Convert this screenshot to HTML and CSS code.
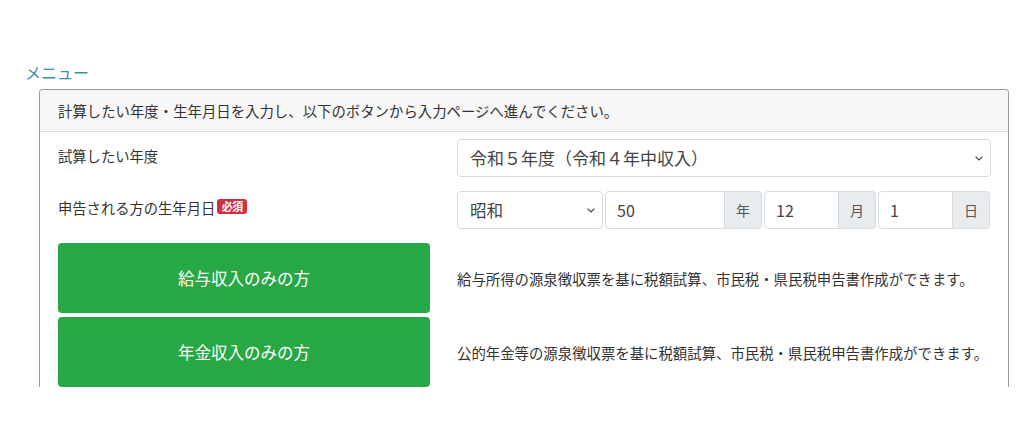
FILE: index.html
```html
<!DOCTYPE html>
<html lang="ja">
<head>
<meta charset="utf-8">
<title>メニュー</title>
<link rel="stylesheet" href="styles.css">
</head>
<body>
<main class="page">
  <h2 class="menu-title">メニュー</h2>
  <section class="card">
    <div class="card-header">計算したい年度・生年月日を入力し、以下のボタンから入力ページへ進んでください。</div>
    <div class="card-body">
      <div class="form-row row-year">
        <div class="label">試算したい年度</div>
        <div class="field">
          <select class="form-select year-select">
            <option>令和５年度（令和４年中収入）</option>
          </select>
        </div>
      </div>
      <div class="form-row row-birth">
        <div class="label">申告される方の生年月日<span class="badge">必須</span></div>
        <div class="field birth">
          <select class="form-select era">
            <option>昭和</option>
          </select>
          <div class="input-group grp-year">
            <input class="form-control" type="text" value="50">
            <span class="addon">年</span>
          </div>
          <div class="input-group grp-md">
            <input class="form-control" type="text" value="12">
            <span class="addon">月</span>
          </div>
          <div class="input-group grp-md">
            <input class="form-control" type="text" value="1">
            <span class="addon">日</span>
          </div>
        </div>
      </div>
      <div class="menu-row first">
        <a class="btn-green" href="#">給与収入のみの方</a>
        <p class="desc">給与所得の源泉徴収票を基に税額試算、市民税・県民税申告書作成ができます。</p>
      </div>
      <div class="menu-row">
        <a class="btn-green" href="#">年金収入のみの方</a>
        <p class="desc">公的年金等の源泉徴収票を基に税額試算、市民税・県民税申告書作成ができます。</p>
      </div>
    </div>
  </section>
</main>
</body>
</html>
```

FILE: styles.css
```css
* { box-sizing: border-box; }

html, body {
  margin: 0;
  padding: 0;
  background: #fff;
}

body {
  font-family: "Noto Sans CJK JP", "Noto Sans", sans-serif;
  color: #333;
  font-size: 14px;
  line-height: 1.5;
  text-spacing-trim: space-all;
}

.page {
  padding-top: 60px;
}

.menu-title {
  margin: 0 0 5px 25px;
  font-size: 16px;
  font-weight: normal;
  line-height: 24px;
  color: #3a8dab;
}

.card {
  margin-left: 39px;
  width: 970px;
  height: 298px;
  overflow: hidden;
  border: 1px solid #9a9a9a;
  border-bottom: none;
  border-radius: 4px 4px 0 0;
}

.card-header {
  background: #f7f7f7;
  border-bottom: 1px solid #dedede;
  padding: 10px 18px;
  font-size: 14.4px;
  line-height: 21px;
  color: #333;
}

.card-body {
  padding: 7px 17px 0 18px;
}

.form-row {
  display: grid;
  grid-template-columns: 372px 1fr;
  column-gap: 27px;
  margin-bottom: 14px;
}

.label {
  padding-top: 6px;
  font-size: 14.3px;
  line-height: 21px;
  display: flex;
  align-items: flex-start;
}

.badge {
  display: inline-block;
  margin-left: 2px;
  margin-top: 2px;
  width: 30px;
  height: 15px;
  line-height: 15px;
  font-size: 11px;
  font-weight: bold;
  text-align: center;
  color: #fff;
  background: #d1303f;
  border-radius: 3px;
  letter-spacing: -0.5px;
}

.form-select,
.form-control {
  display: block;
  height: 38px;
  font-family: inherit;
  font-size: 16px;
  line-height: 24px;
  color: #444;
  background-color: #fff;
  border: 1px solid #d9dde1;
  border-radius: 4px;
  padding: 6px 12px;
  margin: 0;
}

.form-select {
  width: 100%;
  font-size: 16.6px;
  appearance: none;
  -webkit-appearance: none;
  padding-right: 28px;
  background-image: url("data:image/svg+xml,%3Csvg xmlns='http://www.w3.org/2000/svg' viewBox='0 0 8 5'%3E%3Cpath d='M0.6 0.6 L4 4 L7.4 0.6' fill='none' stroke='%23444' stroke-width='1.2'/%3E%3C/svg%3E");
  background-repeat: no-repeat;
  background-position: right 7px center;
  background-size: 8px 5px;
}

.year-select {
  font-size: 17px;
}

.field.birth {
  display: flex;
  gap: 2px;
}

.era {
  width: 146px;
  flex: none;
}

.input-group {
  display: flex;
  flex: none;
}

.grp-year { width: 157px; }
.grp-md { width: 112px; }

.input-group .form-control {
  flex: 1;
  min-width: 0;
  border-radius: 4px 0 0 4px;
  padding-left: 11px;
}

.addon {
  flex: none;
  width: 37px;
  display: flex;
  align-items: center;
  justify-content: center;
  background: #e9ecef;
  border: 1px solid #d9dde1;
  border-left: none;
  border-radius: 0 4px 4px 0;
  font-size: 14px;
  color: #555;
}

.menu-row {
  display: grid;
  grid-template-columns: 372px 1fr;
  column-gap: 27px;
  align-items: center;
  margin-bottom: 4px;
}

.btn-green {
  display: flex;
  align-items: center;
  justify-content: center;
  height: 70px;
  background: #28a745;
  color: #fff;
  text-decoration: none;
  font-size: 16.5px;
  border-radius: 4px;
}

.desc {
  margin: 0;
  font-size: 14.4px;
  line-height: 21px;
  color: #333;
}
```
